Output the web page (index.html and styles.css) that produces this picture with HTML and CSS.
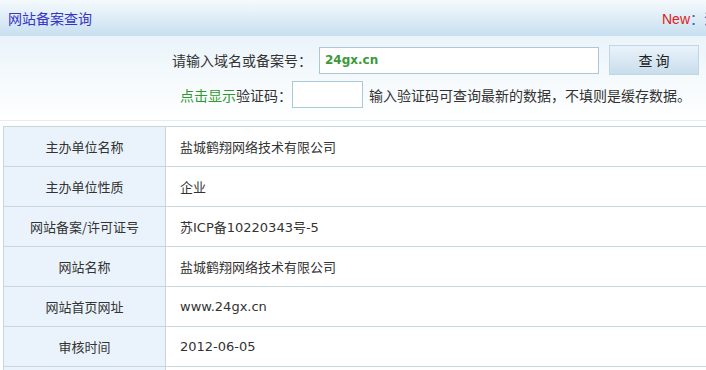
FILE: index.html
```html
<!DOCTYPE html>
<html lang="zh-CN">
<head>
  <meta charset="UTF-8" />
  <title>网站备案查询</title>
  <link rel="stylesheet" href="styles.css">
</head>
<body>
  <div class="page">
    <div class="head">
      <span class="title">网站备案查询</span>
      <span class="news"><em>New</em><a href="#">：江苏备案系统已更新</a></span>
    </div>

    <div class="search">
      <div class="row row-domain">
        <label class="label">请输入域名或备案号：</label>
        <input class="domain" type="text" value="24gx.cn" />
        <button class="btn">查 询</button>
      </div>
      <div class="row row-code">
        <span class="label"><a href="#" class="show">点击显示</a>验证码：</span>
        <input class="code" type="text" />
        <span class="tip">输入验证码可查询最新的数据，不填则是缓存数据。</span>
      </div>
    </div>

    <table class="info">
      <tr><th>主办单位名称</th><td>盐城鹤翔网络技术有限公司</td></tr>
      <tr><th>主办单位性质</th><td>企业</td></tr>
      <tr><th>网站备案/许可证号</th><td>苏ICP备10220343号-5</td></tr>
      <tr><th>网站名称</th><td>盐城鹤翔网络技术有限公司</td></tr>
      <tr><th>网站首页网址</th><td>www.24gx.cn</td></tr>
      <tr><th>审核时间</th><td>2012-06-05</td></tr>
      <tr><th>&nbsp;</th><td>&nbsp;</td></tr>
    </table>
  </div>
</body>
</html>
```

FILE: styles.css
```css
html, body {
  margin: 0;
  padding: 0;
  overflow: hidden;
  background: #fff;
  font-family: "Noto Sans CJK SC", "DejaVu Sans", sans-serif;
  color: #333;
}
.page {
  width: 760px;
}
.head {
  display: flex;
  align-items: center;
  height: 36px;
  background: linear-gradient(#f5fafd, #c7dff0);
}
.title {
  padding-left: 8px;
  font-size: 14px;
  color: #3535c8;
}
.news {
  margin-left: auto;
  width: 98px;
  white-space: nowrap;
  overflow: hidden;
  font-family: "Liberation Sans", "Noto Sans CJK SC", sans-serif;
  font-size: 14px;
}
.news em {
  font-style: normal;
  color: #e02020;
}
.news a {
  color: #2b5fc0;
  text-decoration: none;
}
.search {
  padding: 9px 0 12px;
  background: linear-gradient(#eaf4fa, #fff);
  border-bottom: 1px solid #e2eef0;
  font-size: 14px;
}
.row {
  display: flex;
  align-items: center;
  white-space: nowrap;
}
.row-domain {
  height: 30px;
  padding-left: 172px;
}
.row-code {
  height: 27px;
  margin-top: 6px;
  padding-left: 180px;
}
.row-domain .label {
  width: 140px;
  margin-right: 7px;
}
.row input {
  box-sizing: border-box;
  height: 27px;
  margin: 0;
  border: 1px solid #a9c9d9;
  background: #fff;
  font-family: "DejaVu Sans", sans-serif;
  outline: none;
}
.domain {
  width: 280px;
  padding: 0 5px;
  font-size: 12px;
  font-weight: bold;
  color: #3a9a3a;
}
.code {
  width: 71px;
}
.btn {
  box-sizing: border-box;
  width: 90px;
  height: 30px;
  margin-left: 10px;
  border: 1px solid #c0d6e4;
  background: linear-gradient(#eaf3fa, #c9dded);
  font-family: "Noto Sans CJK SC", sans-serif;
  font-size: 14px;
  color: #222;
}
.show {
  color: #2f9a2f;
  text-decoration: none;
}
.tip {
  margin-left: 6px;
}
.info {
  width: 757px;
  margin: 5px 0 0 3px;
  border-collapse: collapse;
  font-size: 13px;
}
.info th, .info td {
  height: 39px;
  padding: 0;
  border: 1px solid #c6d7dd;
}
.info th {
  width: 161px;
  font-weight: normal;
  text-align: center;
  background: #eaf3fb;
}
.info td {
  padding-left: 14px;
  text-align: left;
  background: #fff;
  font-family: "DejaVu Sans", "Noto Sans CJK SC", sans-serif;
}
```
